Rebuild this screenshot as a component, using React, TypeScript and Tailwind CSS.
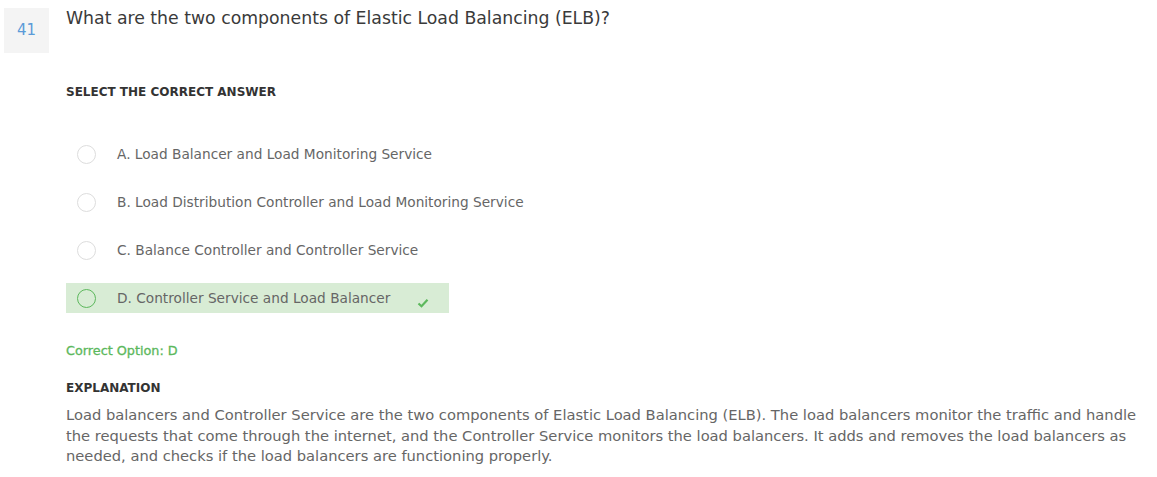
import React from 'react';

const options = [
  { key: 'A', text: 'Load Balancer and Load Monitoring Service', correct: false },
  { key: 'B', text: 'Load Distribution Controller and Load Monitoring Service', correct: false },
  { key: 'C', text: 'Balance Controller and Controller Service', correct: false },
  { key: 'D', text: 'Controller Service and Load Balancer', correct: true },
];

const App: React.FC = () => {
  return (
    <div className="min-h-[477px] bg-white text-[#444]" style={{ fontFamily: '"DejaVu Sans", "Liberation Sans", sans-serif' }}>
      <div className="flex pt-2 pl-1">
        <div className="w-[45px] h-[45px] shrink-0 bg-[#f4f4f4] flex items-center justify-center text-[15px] text-[#5b9bd8]">
          41
        </div>
        <div className="ml-[17px] flex-1 pr-4">
          <h1 className="text-[17.3px] leading-[22px] -mt-[1px] text-[#3a3a3a]">
            What are the two components of Elastic Load Balancing (ELB)?
          </h1>

          <h2 className="mt-[55px] text-[12px] font-bold text-[#333] leading-[16px]">SELECT THE CORRECT ANSWER</h2>

          <div className="mt-[39px] flex flex-col gap-[18px]">
            {options.map((o) => (
              <div
                key={o.key}
                className={`w-[383px] h-[30px] flex items-center pl-[11px] whitespace-nowrap ${o.correct ? 'bg-[#d8ecd5]' : ''}`}
              >
                <span
                  className={`w-[19px] h-[19px] shrink-0 rounded-full border ${o.correct ? 'border-[#5cb85c]' : 'border-[#ddd]'} bg-transparent`}
                />
                <span className="ml-[21px] text-[13.7px] text-[#666]">
                  {o.key}. {o.text}
                </span>
                {o.correct && (
                  <svg className="ml-[27px] mt-[10px]" width="12" height="10" viewBox="0 0 12 10">
                    <path d="M1.5 5.5 L4.5 8.2 L10.5 1.8" fill="none" stroke="#5cb85c" strokeWidth="2.2" />
                  </svg>
                )}
              </div>
            ))}
          </div>

          <p className="mt-[28px] text-[12.8px] text-[#5cb85c] [-webkit-text-stroke:0.3px_#5cb85c]">Correct Option: D</p>

          <h3 className="mt-[19px] text-[12px] font-bold text-[#333]">EXPLANATION</h3>
          <p className="mt-[8px] text-[14.7px] leading-[20.5px] text-[#666] max-w-[1085px]">
            Load balancers and Controller Service are the two components of Elastic Load Balancing (ELB). The load balancers monitor the traffic and handle the requests that come through the internet, and the Controller Service monitors the load balancers. It adds and removes the load balancers as needed, and checks if the load balancers are functioning properly.
          </p>
        </div>
      </div>
    </div>
  );
};

export default App;
